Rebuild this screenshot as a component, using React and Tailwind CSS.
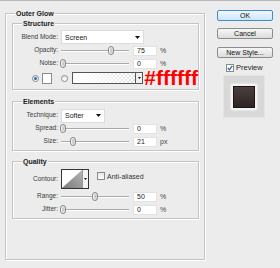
import React from "react";

const font = "font-['Liberation_Sans',Arial,sans-serif]";

function Thumb() {
  return (
    <svg width="6" height="9" viewBox="0 0 6 9">
      <defs>
        <linearGradient id="tg" x1="0" x2="1" y1="0" y2="0">
          <stop offset="0" stopColor="#ffffff" />
          <stop offset="1" stopColor="#cfcfcf" />
        </linearGradient>
      </defs>
      <rect x="0.5" y="0.5" width="5" height="8" rx="2.5" fill="url(#tg)" stroke="#8a8a8a" />
      <line x1="3" y1="2.5" x2="3" y2="6.5" stroke="#b0b0b0" />
    </svg>
  );
}

function Slider({ pct }) {
  return (
    <div className="relative w-[70px] h-[11px] ml-[2px]">
      <div className="absolute left-[1px] right-[1px] top-[5px] h-[1px] bg-[#a9a9a9] shadow-[0_1px_0_#ffffff]" />
      <div className="absolute top-[1px]" style={{ left: `${pct * 64}px` }}>
        <Thumb />
      </div>
    </div>
  );
}

function NumInput({ value }) {
  return (
    <div className="ml-[3px] w-[24px] h-[10px] bg-white border border-[#e2e2e2] flex items-center pl-[3px] text-[7px] leading-none text-[#222]">
      {value}
    </div>
  );
}

function SliderRow({ label, pct, value, unit }) {
  return (
    <div className="flex items-center h-[13px]">
      <div className="w-[45px] text-right text-[6.5px] leading-none text-[#3a3a3a]">{label}</div>
      <Slider pct={pct} />
      <NumInput value={value} />
      <div className="ml-[3px] text-[7px] leading-none text-[#444]">{unit}</div>
    </div>
  );
}

function Arrow() {
  return (
    <svg width="5" height="3" viewBox="0 0 5 3">
      <path d="M0 0 H5 L2.5 3 Z" fill="#111" />
    </svg>
  );
}

function Select({ value, width }) {
  return (
    <div
      className="ml-[3px] h-[14px] bg-white border border-[#dcdcdc] flex items-center justify-between pl-[3px] pr-[3px] text-[7px] leading-none text-[#222]"
      style={{ width }}
    >
      <span>{value}</span>
      <Arrow />
    </div>
  );
}

function Group({ title, className, children }) {
  return (
    <div className={`relative border border-[#c4c4c4] shadow-[inset_1px_1px_0_#ffffff,1px_1px_0_#ffffff] ${className}`}>
      <div className="absolute left-[9px] top-[-5px] px-[1px] bg-[#ececec] text-[7px] leading-[9px] font-bold text-[#222]">
        {title}
      </div>
      {children}
    </div>
  );
}

function Radio({ checked }) {
  return (
    <div className="w-[7px] h-[7px] rounded-full border border-[#8a8a8a] bg-gradient-to-b from-[#e8e8e8] to-[#ffffff] flex items-center justify-center">
      {checked && <div className="w-[3px] h-[3px] rounded-full bg-[#1e6fc4]" />}
    </div>
  );
}

function Button({ children, def }) {
  return (
    <div
      className={`w-[56px] h-[11px] rounded-[2px] flex items-center justify-center text-[7px] leading-none text-[#111] ${
        def
          ? "border border-[#3c8fc8] bg-gradient-to-b from-[#f0f8fe] to-[#cde6f7]"
          : "border border-[#8d8d8d] bg-gradient-to-b from-[#f6f6f6] to-[#dcdcdc]"
      }`}
    >
      {children}
    </div>
  );
}

export default function App() {
  return (
    <div className={`${font} w-[280px] h-[268px] bg-[#ececec] border-t border-[#b8b8b8] flex overflow-hidden`}>
      {/* Left */}
      <div className="pl-[5px] pt-[12px]">
        <Group title="Outer Glow" className="w-[200px] h-[247px] pt-[9px] pl-[6px] pr-[5px]">
          {/* Structure */}
          <Group title="Structure" className="w-[187px] h-[67px] pt-[6px]">
            <div className="flex items-center h-[14px]">
              <div className="w-[45px] text-right text-[6.5px] leading-none text-[#3a3a3a]">Blend Mode:</div>
              <Select value="Screen" width="83px" />
            </div>
            <SliderRow label="Opacity:" pct={0.75} value="75" unit="%" />
            <SliderRow label="Noise:" pct={0} value="0" unit="%" />
            <div className="flex items-center h-[14px] mt-[1px]">
              <div className="ml-[19px]"><Radio checked /></div>
              <div className="ml-[3px] w-[11px] h-[11px] bg-white border border-[#8a8a8a]" />
              <div className="ml-[9px]"><Radio /></div>
              <div className="ml-[4px] w-[79px] h-[12px] border border-[#555] flex">
                <div className="flex-1 bg-[linear-gradient(to_right,#ffffff_10%,rgba(255,255,255,0)),repeating-conic-gradient(#e4e4e4_0_25%,#ffffff_0_50%)] bg-[length:100%_100%,4px_4px]" />
                <div className="w-[7px] border-l border-[#555] bg-[#f0f0f0] flex items-center justify-center">
                  <svg width="3" height="2" viewBox="0 0 3 2"><path d="M0 0 H3 L1.5 2 Z" fill="#111" /></svg>
                </div>
              </div>
              <div className="ml-[1px] mt-[-2px] text-[21px] leading-none font-bold text-[#ff0000]">#ffffff</div>
            </div>
          </Group>

          {/* Elements */}
          <Group title="Elements" className="w-[187px] h-[50px] mt-[11px] pt-[7px]">
            <div className="flex items-center h-[13px]">
              <div className="w-[45px] text-right text-[6.5px] leading-none text-[#3a3a3a]">Technique:</div>
              <Select value="Softer" width="44px" />
            </div>
            <SliderRow label="Spread:" pct={0} value="0" unit="%" />
            <SliderRow label="Size:" pct={0.16} value="21" unit="px" />
          </Group>

          {/* Quality */}
          <Group title="Quality" className="w-[187px] h-[58px] mt-[10px] pt-[7px]">
            <div className="flex items-center h-[20px]">
              <div className="w-[45px] text-right text-[6.5px] leading-none text-[#3a3a3a]">Contour:</div>
              <div className="ml-[3px] w-[28px] h-[20px] border border-[#333] bg-white flex">
                <svg width="20" height="18" viewBox="0 0 20 18">
                  <defs>
                    <linearGradient id="cg" x1="0" x2="1" y1="1" y2="0">
                      <stop offset="0" stopColor="#7a7a7a" />
                      <stop offset="1" stopColor="#b5b5b5" />
                    </linearGradient>
                  </defs>
                  <rect width="20" height="18" fill="#ffffff" />
                  <path d="M0 18 L20 0 L20 18 Z" fill="url(#cg)" />
                </svg>
                <div className="flex-1 border-l border-[#999] bg-[#f2f2f2] flex items-center justify-center">
                  <svg width="3" height="2" viewBox="0 0 3 2"><path d="M0 0 H3 L1.5 2 Z" fill="#111" /></svg>
                </div>
              </div>
              <div className="ml-[8px] mb-[6px] flex items-center">
                <div className="w-[8px] h-[8px] border border-[#8a8a8a] bg-gradient-to-b from-[#e6e6e6] to-white" />
                <div className="ml-[2px] text-[7px] leading-none text-[#333]">Anti-aliased</div>
              </div>
            </div>
            <div className="mt-[1px]">
              <SliderRow label="Range:" pct={0.5} value="50" unit="%" />
              <SliderRow label="Jitter:" pct={0} value="0" unit="%" />
            </div>
          </Group>
        </Group>
      </div>

      {/* Right */}
      <div className="ml-[12px] pt-[9px] flex flex-col items-start">
        <Button def>OK</Button>
        <div className="mt-[7px]"><Button>Cancel</Button></div>
        <div className="mt-[8px]"><Button>New Style...</Button></div>
        <div className="mt-[6px] ml-[9px] flex items-center">
          <div className="w-[8px] h-[8px] border border-[#8a8a8a] bg-white flex items-center justify-center">
            <svg width="6" height="6" viewBox="0 0 6 6">
              <path d="M0.8 3 L2.4 4.8 L5.3 0.8" fill="none" stroke="#2a5db0" strokeWidth="1.2" />
            </svg>
          </div>
          <div className="ml-[2px] text-[7.5px] leading-none text-[#222]">Preview</div>
        </div>
        <div className="mt-[3px] ml-[6px] w-[42px] h-[43px] bg-[#d8d8d8] border border-[#e4e4e4] flex items-center justify-center">
          <div className="w-[22px] h-[22px] border border-[#1a1414] bg-gradient-to-b from-[#4d3f40] to-[#2e2424] shadow-[0_0_0_1px_#f4f4f4,0_0_2px_2px_#ffffff]" />
        </div>
      </div>
    </div>
  );
}
